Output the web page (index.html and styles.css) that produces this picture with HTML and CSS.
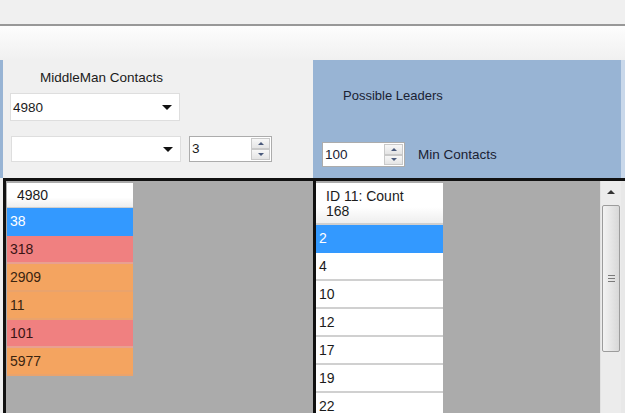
FILE: index.html
```html
<!DOCTYPE html>
<html lang="en">
<head>
  <meta charset="UTF-8">
  <title>Leaders</title>
  <link rel="stylesheet" href="styles.css">
</head>
<body>

  <div class="titlebar"></div>
  <div class="strip"></div>

  <div class="controls">
    <div class="mid-panel">
      <div class="caption">MiddleMan Contacts</div>
      <div class="combo combo-main"><span>4980</span><i class="caret"></i></div>
      <div class="row">
        <div class="combo combo-sub"><span></span><i class="caret"></i></div>
        <div class="spin"><span>3</span><div class="spin-btns"><b class="up"></b><b class="down"></b></div></div>
      </div>
    </div>
    <div class="leaders-panel">
      <div class="caption">Possible Leaders</div>
      <div class="row">
        <div class="spin"><span>100</span><div class="spin-btns"><b class="up"></b><b class="down"></b></div></div>
        <label>Min Contacts</label>
      </div>
    </div>
    <div class="edge"></div>
  </div>

  <div class="lists">
    <div class="grid grid-left">
      <div class="col">
        <div class="head">4980</div>
        <div class="cell sel">38</div>
        <div class="cell coral">318</div>
        <div class="cell sandy">2909</div>
        <div class="cell sandy">11</div>
        <div class="cell coral">101</div>
        <div class="cell sandy">5977</div>
      </div>
    </div>
    <div class="grid grid-right">
      <div class="col">
        <div class="head tall">ID 11: Count<br>168</div>
        <div class="cell sel">2</div>
        <div class="cell">4</div>
        <div class="cell">10</div>
        <div class="cell">12</div>
        <div class="cell">17</div>
        <div class="cell">19</div>
        <div class="cell">22</div>
      </div>
      <div class="scrollbar">
        <div class="arrow"><i></i></div>
        <div class="thumb"><i></i><i></i><i></i></div>
      </div>
    </div>
    <div class="edge"></div>
  </div>

</body>
</html>
```

FILE: styles.css
```css
body {
  margin: 0;
  width: 625px;
  height: 413px;
  overflow: hidden;
  background: #f0f0f0;
  font-family: "Liberation Sans", Arial, sans-serif;
  font-size: 13px;
  color: #1b1b1b;
}
.titlebar {
  height: 24px;
  border-bottom: 2px solid #989898;
}
.strip {
  height: 34px;
  background: linear-gradient(#fdfdfd, #f0f0f0);
}

/* top panels */
.controls {
  display: flex;
  height: 118px;
}
.mid-panel {
  width: 310px;
  border-left: 3px solid #98b4d4;
  background: #f0f0f0;
}
.leaders-panel {
  width: 308px;
  background: #98b4d4;
  color: #1a2233;
}
.edge {
  width: 4px;
  background: #c9d8ea;
}
.caption {
  font-size: 13px;
  line-height: 16px;
}
.mid-panel .caption {
  margin: 10px 0 0 37px;
  font-size: 13.5px;
}
.leaders-panel .caption {
  margin: 28px 0 0 30px;
}
.row {
  display: flex;
  align-items: center;
}
.mid-panel .row {
  margin: 15px 0 0 8px;
}
.leaders-panel .row {
  margin: 38px 0 0 9px;
}
.leaders-panel label {
  margin-left: 13px;
  font-size: 13.5px;
}

.combo {
  display: flex;
  align-items: center;
  justify-content: space-between;
  width: 170px;
  box-sizing: border-box;
  background: #fff;
  border: 1px solid #dedede;
  padding: 0 7px 0 2px;
  font-size: 13.5px;
}
.combo-main {
  height: 28px;
  margin: 7px 0 0 7px;
}
.combo-sub {
  height: 26px;
}
.caret {
  width: 0;
  height: 0;
  border-left: 5px solid transparent;
  border-right: 5px solid transparent;
  border-top: 5px solid #111;
}

.spin {
  display: flex;
  width: 83px;
  height: 26px;
  box-sizing: border-box;
  margin-left: 8px;
  background: #fff;
  border: 1px solid #acacac;
  font-size: 13.5px;
}
.leaders-panel .spin {
  margin-left: 0;
  height: 25px;
}
.spin span {
  flex: 1;
  padding-left: 2px;
  line-height: 23px;
}
.spin-btns {
  width: 19px;
  display: flex;
  flex-direction: column;
  padding: 1px;
}
.spin-btns b {
  flex: 1;
  display: flex;
  align-items: center;
  justify-content: center;
  border: 1px solid #c9c9c9;
  background: linear-gradient(#f7f7f7, #e4e4e4);
}
.up::after,
.down::after {
  content: "";
  border-left: 3px solid transparent;
  border-right: 3px solid transparent;
}
.up::after { border-bottom: 3px solid #4a5a7c; }
.down::after { border-top: 3px solid #4a5a7c; }

/* lists */
.lists {
  display: flex;
  height: 232px;
  margin-left: 3px;
  border-top: 3px solid #111;
}
.lists .edge {
  width: 4px;
  background: #e8e8e8;
}
.grid {
  background: #ababab;
  border-left: 3px solid #111;
}
.grid-left {
  width: 310px;
  padding: 2px 0 0 1px;
  box-sizing: border-box;
}
.grid-right {
  width: 308px;
  box-sizing: border-box;
  display: flex;
  justify-content: space-between;
}
.grid-left .col {
  width: 126px;
}
.grid-right .col {
  width: 127px;
  padding-top: 2px;
}
.head {
  height: 24px;
  line-height: 24px;
  padding-left: 10px;
  font-size: 14px;
  background: linear-gradient(#ffffff 60%, #eeeeee);
  border-bottom: 1px solid #cfcfcf;
}
.head.tall {
  height: 34px;
  padding-top: 6px;
  line-height: 15px;
  border-bottom-width: 2px;
}
.cell {
  height: 26px;
  line-height: 27px;
  padding-left: 3px;
  font-size: 14px;
  background: #fff;
  border-bottom: 2px solid #d0d0d0;
}
.cell.sel { background: #3399ff; color: #fff; border-bottom-color: #3399ff; }
.cell.coral { background: #f08080; color: #3a1414; border-bottom-color: #e9a090; }
.cell.sandy { background: #f4a460; color: #3a2410; border-bottom-color: #eaa36c; }

.scrollbar {
  width: 21px;
  background: #ececec;
  border-left: 1px solid #e2e2e2;
  box-sizing: border-box;
}
.arrow {
  height: 22px;
  display: flex;
  align-items: center;
  justify-content: center;
}
.arrow i {
  border-left: 4px solid transparent;
  border-right: 4px solid transparent;
  border-bottom: 4px solid #333;
}
.thumb {
  margin: 2px 1px 0 1px;
  height: 147px;
  box-sizing: border-box;
  border: 1px solid #9c9c9c;
  border-radius: 2px;
  background: linear-gradient(90deg, #f3f3f3, #e6e6e6 50%, #d8d8d8);
  display: flex;
  flex-direction: column;
  align-items: center;
  justify-content: center;
  gap: 2px;
}
.thumb i {
  width: 7px;
  height: 1px;
  background: #7a7a7a;
}
```
